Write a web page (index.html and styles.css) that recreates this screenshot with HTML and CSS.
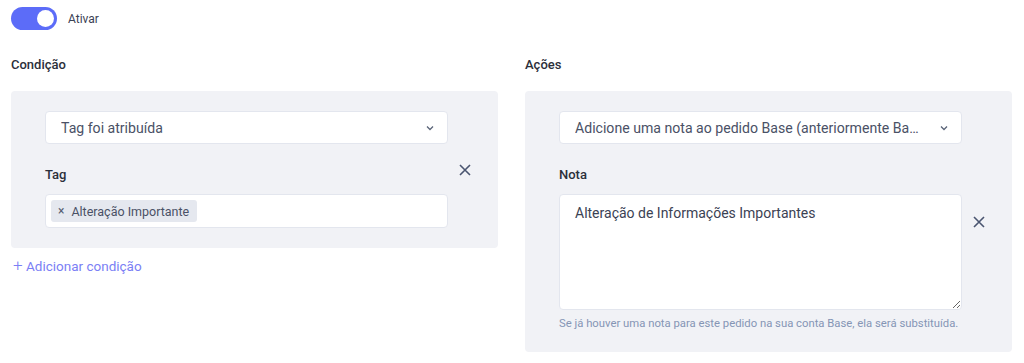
FILE: index.html
```html
<!DOCTYPE html>
<html lang="pt">
<head>
    <meta charset="UTF-8">
    <meta name="viewport" content="width=device-width, initial-scale=1.0">
    <title>Regra</title>
    <link rel="stylesheet" href="styles.css">
</head>
<body>

<div class="toggle-row">
    <span class="toggle"><span class="knob"></span></span>
    <span class="toggle-label">Ativar</span>
</div>

<div class="columns">
    <!-- Condição -->
    <div class="column">
        <h3>Condição</h3>
        <div class="panel">
            <div class="fields">
                <div class="select">
                    <span class="select-text">Tag foi atribuída</span>
                    <svg class="chevron" width="10" height="6" viewBox="0 0 10 6"><path d="M2 1.5l3 3 3-3" fill="none" stroke="#5a6478" stroke-width="1.3"/></svg>
                </div>
                <label class="field-label">Tag</label>
                <div class="tag-input">
                    <span class="chip"><span class="chip-x">×</span>Alteração Importante</span>
                </div>
            </div>
            <button class="remove" title="Remover">
                <svg width="12" height="12" viewBox="0 0 12 12"><path d="M1 1l10 10M11 1L1 11" stroke="#4a5570" stroke-width="1.6"/></svg>
            </button>
        </div>
        <a class="add-link" href="#"><span class="plus">+</span> Adicionar condição</a>
    </div>

    <!-- Ações -->
    <div class="column">
        <h3>Ações</h3>
        <div class="panel">
            <div class="fields">
                <div class="select">
                    <span class="select-text">Adicione uma nota ao pedido Base (anteriormente Base Commerce)</span>
                    <svg class="chevron" width="10" height="6" viewBox="0 0 10 6"><path d="M2 1.5l3 3 3-3" fill="none" stroke="#5a6478" stroke-width="1.3"/></svg>
                </div>
                <label class="field-label">Nota</label>
                <textarea class="note">Alteração de Informações Importantes</textarea>
                <p class="hint">Se já houver uma nota para este pedido na sua conta Base, ela será substituída.</p>
            </div>
            <button class="remove" title="Remover">
                <svg width="12" height="12" viewBox="0 0 12 12"><path d="M1 1l10 10M11 1L1 11" stroke="#4a5570" stroke-width="1.6"/></svg>
            </button>
        </div>
    </div>
</div>

</body>
</html>
```

FILE: styles.css
```css
body {
    font-family: Roboto, "Liberation Sans", sans-serif;
    margin: 0;
    padding: 7px 12px 0 11px;
    background-color: #fff;
    color: #2d3142;
}

/* interruptor */
.toggle-row {
    display: flex;
    align-items: center;
    gap: 11px;
    height: 23px;
}
.toggle {
    width: 46px;
    height: 23px;
    border-radius: 12px;
    background-color: #5c6cf8;
    display: flex;
    align-items: center;
    justify-content: flex-end;
    padding-right: 3px;
    box-sizing: border-box;
}
.knob {
    width: 17px;
    height: 17px;
    border-radius: 50%;
    background-color: #fff;
}
.toggle-label {
    font-size: 12px;
    color: #3b4254;
}

.columns {
    display: grid;
    grid-template-columns: 487px 487px;
    column-gap: 27px;
    margin-top: 27px;
}
h3 {
    font-size: 13px;
    font-weight: 500;
    margin: 0 0 18px 0;
    line-height: 16px;
    color: #2b2f3a;
}
.panel {
    background-color: #f1f2f6;
    border-radius: 4px;
    padding: 20px 0 20px 34px;
    display: flex;
    align-items: center;
}
.fields {
    width: 403px;
    display: flex;
    flex-direction: column;
}
.select {
    height: 33px;
    box-sizing: border-box;
    background-color: #fff;
    border: 1px solid #e3e6ee;
    border-radius: 4px;
    display: flex;
    align-items: center;
    padding: 0 12px 0 15px;
    gap: 18px;
}
.select-text {
    flex: 1;
    font-size: 14.1px;
    color: #4a5166;
    white-space: nowrap;
    overflow: hidden;
    text-overflow: ellipsis;
}
.chevron {
    flex: none;
}
.field-label {
    font-size: 13px;
    font-weight: 500;
    color: #2b2f3a;
    margin: 23px 0 11px 0;
    line-height: 16px;
}
.remove {
    background: none;
    border: none;
    padding: 0;
    width: 34px;
    height: 20px;
    display: flex;
    align-items: center;
    justify-content: center;
    cursor: pointer;
}
.tag-input {
    height: 34px;
    box-sizing: border-box;
    background-color: #fff;
    border: 1px solid #e3e6ee;
    border-radius: 4px;
    padding: 4px 5px;
    display: flex;
    align-items: center;
}
.chip {
    background-color: #e5e8ef;
    border-radius: 3px;
    height: 22px;
    display: inline-flex;
    align-items: center;
    padding: 0 8px 0 7px;
    font-size: 12.5px;
    color: #4a5166;
}
.chip-x {
    font-size: 12px;
    margin-right: 7px;
    color: #555d70;
}
.add-link {
    display: inline-block;
    margin-top: 7px;
    margin-left: 2px;
    font-size: 13.5px;
    color: #7b80f5;
    text-decoration: none;
}
.plus {
    font-size: 17px;
    font-weight: 300;
}
.note {
    height: 116px;
    box-sizing: border-box;
    resize: vertical;
    background-color: #fff;
    border: 1px solid #e3e6ee;
    border-radius: 4px;
    padding: 10px 15px;
    font-family: Roboto, "Liberation Sans", sans-serif;
    font-size: 14px;
    color: #3b4254;
    display: block;
}
.hint {
    margin: 6px 0 0 0;
    font-size: 11.3px;
    line-height: 16px;
    color: #8595b5;
}
```
